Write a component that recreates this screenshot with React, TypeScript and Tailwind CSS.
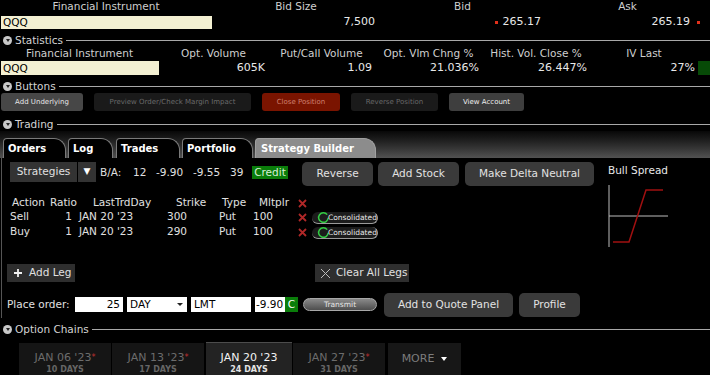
import React from 'react'

const SectionHeader = ({ title, className = '' }: { title: string; className?: string }) => (
  <div className={`flex items-center h-[14px] ${className}`}>
    <span className="ml-[3px] w-[9px] h-[9px] rounded-full bg-[#c8c8c8] flex items-center justify-center">
      <span className="w-0 h-0 border-l-[2.5px] border-r-[2.5px] border-t-[3px] border-l-transparent border-r-transparent border-t-[#222]" />
    </span>
    <span className="ml-[3px] text-[10.5px] text-[#d4d4d4] leading-[14px]">{title}</span>
    <span className="ml-[3px] flex-1 h-px bg-[#a8a8a8]" />
  </div>
)

const RedX = () => (
  <svg width="9" height="9" viewBox="0 0 9 9">
    <path d="M1 1L8 8M8 1L1 8" stroke="#b02828" strokeWidth="1.8" />
  </svg>
)

const Consolidated = () => (
  <div className="relative w-[66px] h-[13px]">
    <div className="absolute left-0 right-0 top-[1px] h-[12px] rounded-full border-b border-r border-[#9a9a9a] bg-[#1c1c1c]" />
    <svg className="absolute left-[5px] top-0" width="13" height="13" viewBox="0 0 13 13">
      <path d="M10.2 3.6A4.8 4.8 0 1 0 11.2 6.8" fill="none" stroke="#33cc44" strokeWidth="1.5" />
    </svg>
    <span className="absolute left-[16px] top-[2px] text-[7.5px] leading-[10px] text-[#e8e8e8]">Consolidated</span>
  </div>
)

const GrayButton = ({ label, className = '' }: { label: string; className?: string }) => (
  <div className={`h-[24px] rounded-[5px] bg-[#3a3a3a] text-[#e2e2e2] text-[10.5px] flex items-center justify-center ${className}`}>
    {label}
  </div>
)

const DateTab = ({ date, days, active, star }: { date: string; days: string; active?: boolean; star?: boolean }) => (
  <div
    className={`flex flex-col items-center ${
      active ? 'h-[33px] bg-[#232323] border-t border-[#4c4c4c] w-[86px] ml-[2px]' : 'h-[32px] bg-[#151515] w-[92px] ml-px'
    }`}
  >
    <div className={`mt-[9px] text-[11px] leading-[12px] ${active ? 'text-[#f2f2f2]' : 'text-[#6c6c6c]'}`}>
      {date}
      {star && <span className="text-[#c03030] text-[8px] align-top">*</span>}
    </div>
    <div className={`text-[8px] leading-[11px] font-bold ${active ? 'text-[#e4e4e4]' : 'text-[#666]'}`}>{days}</div>
  </div>
)

export default function App() {
  const tabs = [
    { label: 'Orders', w: 'w-[63px]' },
    { label: 'Log', w: 'w-[45px] ml-[2px]' },
    { label: 'Trades', w: 'w-[64px] ml-[3px]' },
    { label: 'Portfolio', w: 'w-[71px] ml-[2px]' },
  ]

  return (
    <div className="w-[710px] h-[375px] overflow-hidden bg-black font-['DejaVu_Sans',sans-serif] text-[#e0e0e0]">
      {/* Quote */}
      <div className="flex h-[14px] items-center text-[10.5px] text-[#cfcfcf]">
        <div className="w-[212px] text-center">Financial Instrument</div>
        <div className="w-[168px] text-center">Bid Size</div>
        <div className="w-[165px] text-center">Bid</div>
        <div className="flex-1 text-center">Ask</div>
      </div>
      <div className="flex h-[16px] items-center text-[11px] text-[#e8e8e8]">
        <div className="w-[212px] pl-px">
          <div className="h-[13px] bg-[#f3f0d2] text-black text-[10.5px] leading-[13px] pl-[2px]">QQQ</div>
        </div>
        <div className="w-[168px] text-right pr-[5px]">7,500</div>
        <div className="w-[165px] flex items-center justify-end pr-[4px]">
          <span className="w-[3px] h-[3px] bg-[#e0301a] mr-[5px]" />
          265.17
        </div>
        <div className="flex-1 flex items-center justify-end pr-[10px]">
          265.19
          <span className="w-[3px] h-[3px] bg-[#e0301a] ml-[7px]" />
        </div>
      </div>

      {/* Statistics */}
      <SectionHeader title="Statistics" className="mt-[3px]" />
      <div className="flex h-[14px] items-center text-[10.5px] text-[#cfcfcf]">
        <div className="w-[159px] text-center">Financial Instrument</div>
        <div className="w-[109px] text-center">Opt. Volume</div>
        <div className="w-[107px] text-center">Put/Call Volume</div>
        <div className="w-[107px] text-center">Opt. Vlm Chng %</div>
        <div className="w-[108px] text-center">Hist. Vol. Close %</div>
        <div className="w-[108px] text-center">IV Last</div>
      </div>
      <div className="flex h-[14px] items-center text-[11px] text-[#e8e8e8]">
        <div className="w-[159px] pl-px">
          <div className="h-[14px] bg-[#f3f0d2] text-black text-[10.5px] leading-[14px] pl-[2px]">QQQ</div>
        </div>
        <div className="w-[109px] text-right pr-[3px]">605K</div>
        <div className="w-[107px] text-right pr-[3px]">1.09</div>
        <div className="w-[107px] text-right pr-[3px]">21.036%</div>
        <div className="w-[108px] text-right pr-[3px]">26.447%</div>
        <div className="w-[108px] text-right pr-[3px]">27%</div>
        <div className="flex-1 h-[14px] bg-[#074a07]" />
      </div>

      {/* Buttons */}
      <SectionHeader title="Buttons" className="mt-[4px]" />
      <div className="flex h-[18px] text-[7px]">
        <div className="ml-px w-[82px] rounded-[3px] bg-[#474747] text-[#e6e6e6] flex items-center justify-center">Add Underlying</div>
        <div className="ml-[11px] w-[157px] rounded-[3px] bg-[#1a1a1a] text-[#6a6a6a] flex items-center justify-center">Preview Order/Check Margin Impact</div>
        <div className="ml-[11px] w-[78px] rounded-[3px] bg-[#7a1400] text-[#d08070] flex items-center justify-center">Close Position</div>
        <div className="ml-[11px] w-[87px] rounded-[3px] bg-[#1a1a1a] text-[#686868] flex items-center justify-center">Reverse Position</div>
        <div className="ml-[11px] w-[75px] rounded-[3px] bg-[#3e3e3e] text-[#f0f0f0] flex items-center justify-center">View Account</div>
      </div>

      {/* Trading */}
      <SectionHeader title="Trading" className="mt-[6px]" />
      <div className="h-[27px] flex items-end bg-linear-to-b from-[#080808] to-[#525252] pl-[3px]">
        {tabs.map((t) => (
          <div
            key={t.label}
            className={`${t.w} h-[20px] rounded-tl-[4px] rounded-tr-[12px] border border-b-0 border-[#7a7a7a] bg-black text-white font-bold text-[10px] pl-[4px] flex items-center`}
          >
            {t.label}
          </div>
        ))}
        <div className="w-[121px] ml-[2px] h-[20px] rounded-tl-[4px] rounded-tr-[12px] border border-b-0 border-[#a0a0a0] bg-[#8c8c8c] text-white font-bold text-[10px] pl-[5px] flex items-center">
          Strategy Builder
        </div>
      </div>

      <div className="ml-px border-l border-[#555] flex">
        <div className="w-[606px] pl-[8px] pb-[2px]">
          {/* Strategy row */}
          <div className="mt-[4px] flex items-start h-[24px] text-[10.5px]">
            <div className="w-[67px] h-[20px] bg-[#333] flex items-center justify-center text-[#e0e0e0]">Strategies</div>
            <div className="ml-px w-[18px] h-[20px] bg-[#333] flex items-center justify-center text-white text-[9px]">▼</div>
            <div className="ml-[4px] w-[33px] leading-[20px]">B/A:</div>
            <div className="w-[23px] leading-[20px]">12</div>
            <div className="w-[37px] leading-[20px]">-9.90</div>
            <div className="w-[37px] leading-[20px]">-9.55</div>
            <div className="w-[22px] leading-[20px]">39</div>
            <div className="mt-[4px] w-[36px] h-[13px] bg-[#0a7d0a] text-[#d8f0d8] leading-[13px] text-center">Credit</div>
            <GrayButton label="Reverse" className="ml-[14px] w-[71px]" />
            <GrayButton label="Add Stock" className="ml-[5px] w-[81px]" />
            <GrayButton label="Make Delta Neutral" className="ml-[6px] w-[129px]" />
          </div>

          {/* Legs table */}
          <div className="mt-[10px] text-[10.5px] text-[#e0e0e0]">
            <div className="flex items-center h-[14px]">
              <div className="w-[38px] pl-[2px]">Action</div>
              <div className="w-[30px] pl-[2px]">Ratio</div>
              <div className="w-[87px] pl-[15px]">LastTrdDay</div>
              <div className="w-[50px] pl-[11px]">Strike</div>
              <div className="w-[37px] pl-[7px]">Type</div>
              <div className="w-[45px] pl-[7px]">Mltplr</div>
              <div className="w-[15px] pl-[1px] flex"><RedX /></div>
            </div>
            {[
              { a: 'Sell', s: '300' },
              { a: 'Buy', s: '290' },
            ].map((r, i) => (
              <div key={r.a} className={`flex items-center h-[14px] ${i === 1 ? 'mt-px' : ''}`}>
                <div className="w-[38px]">{r.a}</div>
                <div className="w-[30px] text-right pr-[6px]">1</div>
                <div className="w-[87px] pl-px">JAN 20 '23</div>
                <div className="w-[50px] pl-[2px]">{r.s}</div>
                <div className="w-[37px] pl-[4px]">Put</div>
                <div className="w-[45px] pl-px">100</div>
                <div className="w-[15px] pl-[1px] flex"><RedX /></div>
                <Consolidated />
              </div>
            ))}
          </div>

          {/* Add / clear legs */}
          <div className="mt-[25px] -ml-[3px] flex h-[18px] text-[10.5px]">
            <div className="w-[68px] bg-[#2e2e2e] flex items-center pl-[6px]">
              <svg width="10" height="10" viewBox="0 0 10 10">
                <path d="M5 1V9M1 5H9" stroke="#f0f0f0" strokeWidth="1.8" />
              </svg>
              <span className="ml-[6px]">Add Leg</span>
            </div>
            <div className="ml-[240px] w-[94px] bg-[#2e2e2e] flex items-center pl-[5px]">
              <svg width="11" height="11" viewBox="0 0 11 11">
                <path d="M1 1L10 10M10 1L1 10" stroke="#bdbdbd" strokeWidth="1" />
              </svg>
              <span className="ml-[5px]">Clear All Legs</span>
            </div>
          </div>

          {/* Place order */}
          <div className="mt-[11px] -ml-[3px] flex items-center h-[23px] text-[10.5px]">
            <div className="w-[68px]">Place order:</div>
            <div className="w-[48px] h-[15px] bg-white text-black text-right pr-[3px] leading-[15px]">25</div>
            <div className="ml-[4px] w-[60px] h-[15px] bg-white text-black pl-[3px] leading-[15px] flex items-center justify-between pr-[4px]">
              DAY
              <span className="w-0 h-0 border-l-[3px] border-r-[3px] border-t-[3px] border-l-transparent border-r-transparent border-t-[#222]" />
            </div>
            <div className="ml-[4px] w-[60px] h-[15px] bg-white text-black pl-[3px] leading-[15px]">LMT</div>
            <div className="ml-[4px] w-[30px] h-[15px] bg-white text-black leading-[15px] pl-px">-9.90</div>
            <div className="w-[13px] h-[15px] bg-[#0a7d0a] text-white leading-[15px] text-center">C</div>
            <div className="ml-[5px] w-[74px] h-[13px] rounded-full border border-[#a8a8a8] bg-linear-to-b from-[#8a8a8a] to-[#4e4e4e] text-[#e4e4e4] text-[7.5px] leading-[11px] text-center">
              Transmit
            </div>
            <GrayButton label="Add to Quote Panel" className="ml-[7px] w-[129px] h-[23px]" />
            <GrayButton label="Profile" className="ml-[6px] w-[61px] h-[23px]" />
          </div>
        </div>

        {/* Payoff chart */}
        <div className="flex-1 pt-[6px] text-[10.5px] text-[#e8e8e8]">
          <div className="leading-[12px]">Bull Spread</div>
          <svg className="mt-[7px]" width="66" height="66" viewBox="0 0 66 66">
            <path d="M1 2V64M1 33H60" stroke="#bdbdbd" strokeWidth="1" fill="none" />
            <path d="M5 59H21L38 7H55" stroke="#a01010" strokeWidth="1.5" fill="none" />
          </svg>
        </div>
      </div>

      {/* Option Chains */}
      <SectionHeader title="Option Chains" className="mt-[4px]" />
      <div className="mt-[6px] ml-[18px] flex items-end h-[33px]">
        <DateTab date="JAN 06 '23" days="10 DAYS" star />
        <DateTab date="JAN 13 '23" days="17 DAYS" star />
        <DateTab date="JAN 20 '23" days="24 DAYS" active />
        <DateTab date="JAN 27 '23" days="31 DAYS" star />
        <div className="ml-[3px] w-[73px] h-[32px] bg-[#171717] flex items-center justify-center text-[11px] text-[#7c7c7c]">
          MORE
          <span className="ml-[7px] w-0 h-0 border-l-[3.5px] border-r-[3.5px] border-t-[4px] border-l-transparent border-r-transparent border-t-white" />
        </div>
      </div>
    </div>
  )
}
